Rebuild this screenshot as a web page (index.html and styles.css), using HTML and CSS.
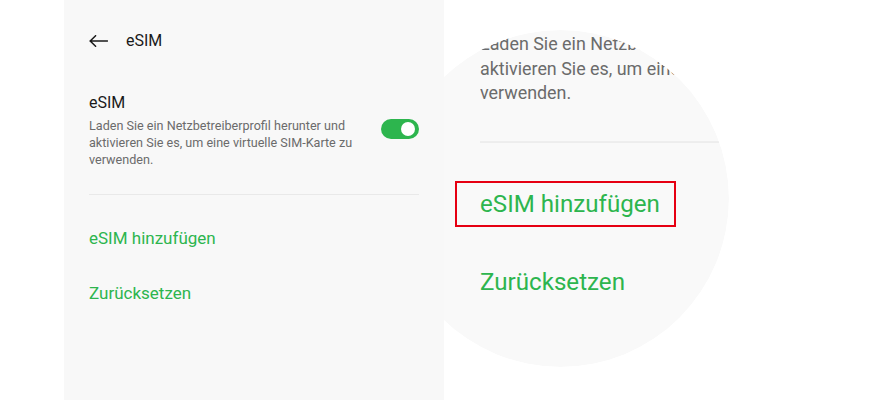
FILE: index.html
```html
<!DOCTYPE html>
<html lang="de">
<head>
<meta charset="utf-8">
<link rel="stylesheet" href="styles.css">
</head>
<body>
<div class="stage">
  <div class="gutter"></div>
  <section class="panel">
    <header class="topbar">
      <svg class="back" width="19" height="12" viewBox="0 0 19 12"><path d="M1 6H18.5M6.6 0.7L1.2 6L6.6 11.3" fill="none" stroke="#1a1a1a" stroke-width="1.5" stroke-linecap="round" stroke-linejoin="round"/></svg>
      <span class="title">eSIM</span>
    </header>
    <div class="setting">
      <div class="setting-text">
        <div class="setting-name">eSIM</div>
        <p class="desc">Laden Sie ein Netzbetreiberprofil herunter und aktivieren Sie es, um eine virtuelle SIM-Karte zu verwenden.</p>
      </div>
      <div class="toggle"><span class="knob"></span></div>
    </div>
    <div class="divider"></div>
    <ul class="actions">
      <li>eSIM hinzufügen</li>
      <li>Zurücksetzen</li>
    </ul>
  </section>

  <div class="lens">
    <div class="lens-pad">
      <div class="lens-content">
        <div class="setting">
          <div class="setting-text">
            <p class="desc">Laden Sie ein Netzbetreiberprofil herunter und aktivieren Sie es, um eine virtuelle SIM-Karte zu verwenden.</p>
          </div>
        </div>
        <div class="divider"></div>
        <ul class="actions">
          <li>eSIM hinzufügen</li>
          <li>Zurücksetzen</li>
        </ul>
      </div>
    </div>
  </div>
  <div class="highlight"></div>
</div>
</body>
</html>
```
FILE: styles.css
```css
* { box-sizing: border-box; }
html, body { margin: 0; padding: 0; background: #ffffff; }
body { font-family: Roboto, "Noto Sans", sans-serif; }

.stage {
  position: relative;
  width: 879px;
  height: 400px;
  display: flex;
  overflow: hidden;
  background: #ffffff;
}
.gutter { width: 64px; flex: none; }

.panel {
  position: relative;
  z-index: 2;
  width: 380px;
  flex: none;
  height: 400px;
  background: #f8f8f8;
  padding: 28px 25px 0 25px;
  display: flex;
  flex-direction: column;
}

.topbar {
  height: 26px;
  display: flex;
  align-items: center;
  gap: 18px;
}
.back { display: block; flex: none; }
.title { font-size: 16px; color: #1a1a1a; line-height: 20px; }

.setting {
  margin-top: 38.5px;
  display: flex;
  align-items: center;
  gap: 4px;
}
.setting-text { width: 288px; flex: none; }
.setting-name { font-size: 16px; line-height: 20px; color: #1a1a1a; }
.desc {
  margin: 4px 0 0 0;
  font-size: 12.6px;
  line-height: 17px;
  color: #6b6b6b;
}

.toggle {
  margin-left: auto;
  width: 38px;
  height: 20px;
  flex: none;
  border-radius: 10px;
  background: #2db54e;
  display: flex;
  align-items: center;
  justify-content: flex-end;
  padding-right: 4px;
  margin-top: -2px;
}
.knob {
  width: 14px;
  height: 14px;
  border-radius: 50%;
  background: #ffffff;
}

.divider {
  margin-top: 26px;
  height: 1px;
  background: #e9e9e9;
}

.actions {
  list-style: none;
  margin: 0;
  padding: 16px 0 0 0;
}
.actions li {
  height: 55px;
  line-height: 55px;
  font-size: 17px;
  color: #2db54e;
}

/* magnifier lens overlay (sits behind the panel) */
.lens {
  position: absolute;
  z-index: 1;
  left: 392px;
  top: 30px;
  width: 337px;
  height: 337px;
  border-radius: 50%;
  clip-path: circle(50% at 50% 50%);
  background: #f9f9f9;
  overflow: hidden;
}
.lens-pad {
  padding-left: 88px;
  padding-top: 2px;
}
.lens-content {
  width: 330px;
  transform: scale(1.42);
  transform-origin: 0 0;
}
.lens-content .setting { margin-top: 0; }
.lens-content .desc { margin-top: 0; }

.highlight {
  position: absolute;
  z-index: 3;
  left: 455px;
  top: 181px;
  width: 221px;
  height: 46px;
  border: 2px solid #e60012;
}
```
